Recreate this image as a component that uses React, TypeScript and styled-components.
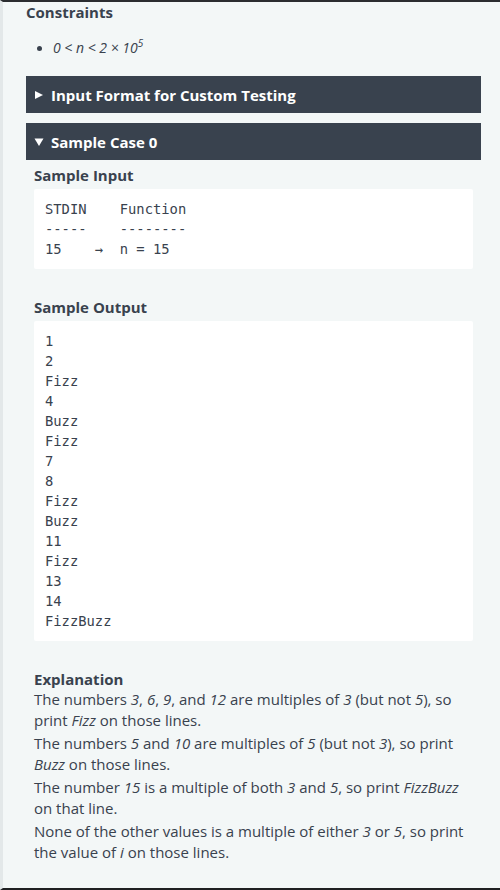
import React from "react";
import styled, { createGlobalStyle } from "styled-components";

const Global = createGlobalStyle`
  html, body { margin: 0; padding: 0; background: #f3f7f7; }
  body { font-family: "Open Sans", "Noto Sans", sans-serif; color: #39424e; }
  * { box-sizing: border-box; }
`;

const Page = styled.div`
  height: 890px;
  background: #f3f7f7;
  border-top: 2px solid #2b2d30;
  border-bottom: 2px solid #1f2022;
  border-left: 3px solid #e3e8e9;
  padding: 0 19px 0 23px;
  overflow: hidden;
`;

const Heading = styled.h3<{ $top?: number; $bottom?: number }>`
  margin: ${(p) => p.$top ?? 0}px 0 ${(p) => p.$bottom ?? 0}px;
  font-size: 15px;
  line-height: 20px;
  font-weight: 700;
  color: #39424e;
`;

const List = styled.ul`
  margin: 15px 0 18px;
  padding-left: 27px;
  font-size: 14px;
  line-height: 21px;
  li::marker { font-size: 13px; }
`;

const Math = styled.em`
  font-style: italic;
  sup { font-size: 10px; line-height: 0; }
`;

const Bar = styled.div<{ $gap?: number }>`
  display: flex;
  align-items: center;
  gap: 7px;
  height: 37px;
  margin-bottom: ${(p) => p.$gap ?? 0}px;
  padding-left: 8px;
  background: #39424e;
  color: #ffffff;
  font-size: 15px;
  font-weight: 700;
`;

const Tri = styled.svg`
  width: 10px;
  height: 10px;
  flex: none;
  fill: #ffffff;
`;

const CaseBody = styled.div`
  padding: 0 8px;
`;

const Code = styled.pre`
  margin: 0;
  padding: 10px 11px;
  background: #ffffff;
  border-radius: 2px;
  font-family: "DejaVu Sans Mono", "Liberation Mono", monospace;
  font-size: 13.8px;
  line-height: 20px;
  color: #39424e;
`;

const Para = styled.p`
  margin: 0 0 2px;
  font-size: 15px;
  line-height: 21px;
  color: #39424e;
  em { font-style: italic; }
`;

const inputText = `STDIN    Function
-----    --------
15    \u2192  n = 15`;

const outputLines = ["1", "2", "Fizz", "4", "Buzz", "Fizz", "7", "8", "Fizz", "Buzz", "11", "Fizz", "13", "14", "FizzBuzz"];

export default function App() {
  return (
    <>
      <Global />
      <Page>
        <Heading>Constraints</Heading>
        <List>
          <li>
            <Math>
              0 &lt; n &lt; 2 × 10<sup>5</sup>
            </Math>
          </li>
        </List>
        <Bar $gap={10}>
          <Tri viewBox="0 0 10 10">
            <polygon points="1,1 9,5 1,9" />
          </Tri>
          Input Format for Custom Testing
        </Bar>
        <Bar>
          <Tri viewBox="0 0 10 10">
            <polygon points="0.5,1.5 9.5,1.5 5,9" />
          </Tri>
          Sample Case 0
        </Bar>
        <CaseBody>
          <Heading $top={5} $bottom={4}>Sample Input</Heading>
          <Code>{inputText}</Code>
          <Heading $top={28} $bottom={4}>Sample Output</Heading>
          <Code>{outputLines.join("\n")}</Code>
          <Heading $top={28}>Explanation</Heading>
          <Para>
            The numbers <em>3</em>, <em>6</em>, <em>9</em>, and <em>12</em> are multiples of <em>3</em> (but not <em>5</em>), so print <em>Fizz</em> on those lines.
          </Para>
          <Para>
            The numbers <em>5</em> and <em>10</em> are multiples of <em>5</em> (but not <em>3</em>), so print <em>Buzz</em> on those lines.
          </Para>
          <Para>
            The number <em>15</em> is a multiple of both <em>3</em> and <em>5</em>, so print <em>FizzBuzz</em> on that line.
          </Para>
          <Para>
            None of the other values is a multiple of either <em>3</em> or <em>5</em>, so print the value of <em>i</em> on those lines.
          </Para>
        </CaseBody>
      </Page>
    </>
  );
}
